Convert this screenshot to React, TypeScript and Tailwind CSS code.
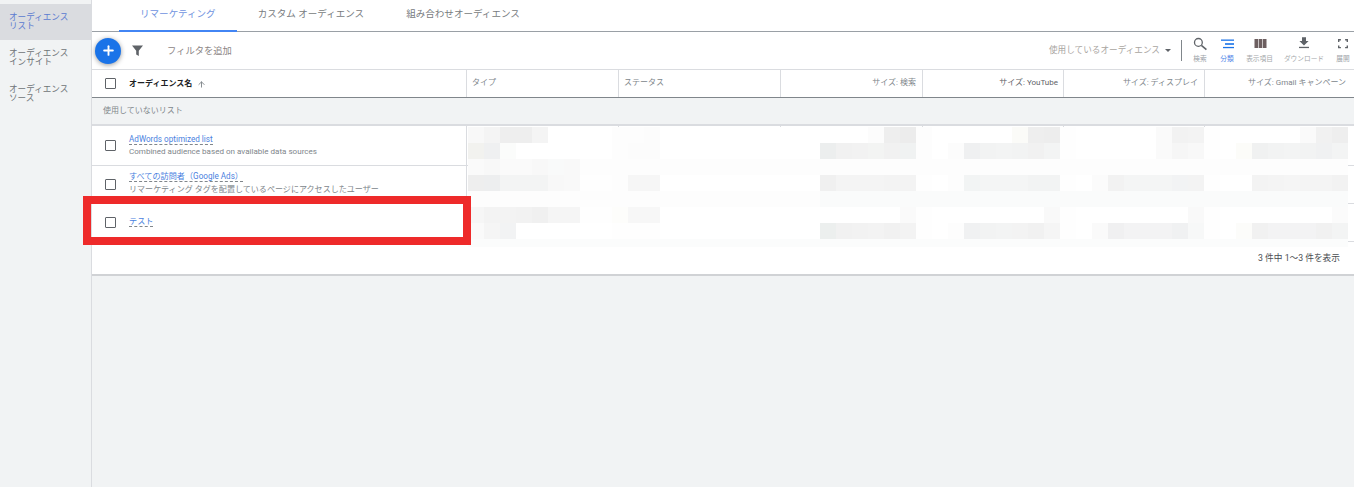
import { ArrowUp, Plus } from "lucide-react";

const FONT = "font-['Roboto','Noto_Sans_CJK_JP',sans-serif]";

const sideItems = [
  { lines: ["オーディエンス", "リスト"], active: true },
  { lines: ["オーディエンス", "インサイト"], active: false },
  { lines: ["オーディエンス", "ソース"], active: false },
];

// blurred-out cells of the table, 16px blocks, one list of hex shades per row
const W = "ffffff";
const fill = (n: number, c: string) => Array(n).fill(c) as string[];
const mosaic: string[][] = [
  ["f8f8f8", "f4f4f4", "eeeeee", "eeeeee", "f4f4f4", ...fill(4, W), "fdfdfd", "fdfdfd", "fcfcfc", ...fill(13, W), "fcfcfc", "eeeeee", "ececec", "fdfdfd", ...fill(5, W), "fbfbf8", "eeeeee", "ededed", "fefefe", ...fill(5, W), "fafafa", "f2f2f2", "f3f3f3", "fefefe", ...fill(5, W), "fafafa", "f1f1f1", "eeeeee"],
  ["f2f2ef", "eff0f1", "fbfcfb", ...fill(6, W), "fdfdfd", "fcfcfc", "fcfcfc", ...fill(10, W), "eceeee", "f1f1f1", "f2f2f2", "f3f4f3", "f1f1f1", "f0f2f2", "fdfdfd", W, "fcfcfc", "eff0f1", "f2f3f3", "f3f4f4", "f2f3f3", "f1f1f1", "f3f4f4", "fefefe", ...fill(5, W), "fafafa", "f6f6f6", "f8f8f8", "fefefe", W, "fcfcf9", "f0f1f1", "f2f3f3", "f3f4f4", "f2f3f3", "f0f1f2", "f3f4f4"],
  ["fafafa", "f8f8f8", "fafafa", "fafafa", "f8f8f8", "f9fafa", "f9f9f9", ...fill(48, "fdfdfd")],
  ["eeeeee", "edeeef", "f3f4f4", "f3f4f4", "f3f4f4", "f8f8f8", "f9f9f9", "fefefe", "fefefe", "fdfdfd", "f6f6f6", "f6f6f6", ...fill(10, W), "f0f0f0", "f4f4f4", "f4f4f4", "f4f4f4", "f3f3f3", "f3f3f3", "fefefe", W, "fdfdfd", "f2f4f4", "f4f5f5", "f4f5f5", "f4f5f5", "f2f3f3", "f2f3f3", "fefefe", W, "fbfbfb", "f2f2f2", "f4f5f5", "f4f5f5", "f4f5f5", "f2f3f4", "f3f3f3", "fefefe", W, W, "f3f3f3", "f4f4f4", "f5f5f5", "f4f4f4", "f4f4f4", "f2f2f2"],
  [...fill(22, "fdfdfd"), ...fill(33, "fafbfb")],
  ["f6f6f6", "f3f3f3", "f3f3f3", "f2f2f2", "f0f0f0", "f5f5f5", "f5f5f5", "fefefe", "fefefe", "fdfdfb", "f7f7f7", "f7f7f7", ...fill(15, W), "fafafa", "fefefe", ...fill(7, W), "f9f9f9", "fefefe", ...fill(7, W), "f9f9f9", "fefefe", ...fill(7, W), "fbfbfb"],
  ["fafafa", "f5f5f5", "f2f3f4", ...fill(6, W), "fefefe", "fefefe", "fefefe", ...fill(10, W), "ecefee", "f1f1f1", "f2f2f2", "f3f3f3", "f1f1f1", "f3f3f3", "fefefe", W, "fdfdfd", "f0f1f2", "f2f3f3", "f3f4f4", "f3f3f3", "f1f1f1", "f5f5f5", "fefefe", W, "fafafa", "f0f0f1", "f3f3f4", "f3f3f4", "f3f3f4", "f0f1f2", "f7f8f8", "fefefe", W, "fcfcfa", "f1f1f1", "f3f3f4", "f3f3f4", "f3f3f4", "f1f1f1", "f3f4f4"],
  fill(55, "fbfcfc"),
];

const columns = [
  { label: "タイプ", width: "w-[152px]", align: "text-left pl-[5px]" },
  { label: "ステータス", width: "w-[162px]", align: "text-left pl-[5px]" },
  { label: "サイズ: 検索", width: "w-[142px]", align: "text-right pr-[6px]" },
  { label: "サイズ: YouTube", width: "w-[141px]", align: "text-right pr-[5px] text-[#5f6368]" },
  { label: "サイズ: ディスプレイ", width: "w-[141px]", align: "text-right pr-[6px]" },
];

const rows = [
  {
    name: "AdWords optimized list",
    desc: "Combined audience based on available data sources",
    height: "h-[40px]",
    text: "",
    gap: "mt-[1px]",
  },
  {
    name: "すべての訪問者（Google Ads）",
    desc: "リマーケティング タグを配置しているページにアクセスしたユーザー",
    height: "h-[38px]",
    text: "-mt-[3px]",
    gap: "mt-[2px]",
  },
  { name: "テスト", desc: "", height: "h-[38px]", text: "-mt-[2px]", gap: "" },
];

function Checkbox() {
  return <div className="w-[11px] h-[11px] border-[1.5px] border-[#5f6368] rounded-[1px] bg-white shrink-0" />;
}

function SearchIcon() {
  return (
    <svg width="14" height="14" viewBox="0 0 14 14" fill="none" stroke="#5f6368">
      <circle cx="5.4" cy="5.4" r="3.9" strokeWidth="1.3" />
      <path d="M8.4 8.4L13.4 12.6" strokeWidth="1.6" />
    </svg>
  );
}

function SegmentIcon() {
  return (
    <svg width="14" height="14" viewBox="0 0 14 14" fill="#1a73e8">
      <rect x="1" y="2.5" width="13" height="1.3" />
      <rect x="5" y="6.2" width="9" height="1.6" />
      <rect x="3" y="9.9" width="11" height="1.3" />
    </svg>
  );
}

function ColumnsIcon() {
  return (
    <svg width="14" height="14" viewBox="0 0 14 14" fill="#6d5f60">
      <rect x="1.5" y="2" width="3.6" height="9" />
      <rect x="5.7" y="2" width="3.6" height="9" />
      <rect x="9.9" y="2" width="3.6" height="9" />
    </svg>
  );
}

function DownloadIcon() {
  return (
    <svg width="14" height="14" viewBox="0 0 14 14" fill="#5f6368">
      <path d="M5 0.2h4v3.8h2.6L7 8.6 2.4 4H5z" />
      <rect x="2" y="9.8" width="10" height="1.3" />
    </svg>
  );
}

function ExpandIcon() {
  return (
    <svg width="14" height="14" viewBox="0 0 14 14" fill="none" stroke="#5f6368" strokeWidth="1.4">
      <path d="M2.7 4.9V2.7h2.2M9.1 2.7h2.2v2.2M11.3 8.4v2.2H9.1M4.9 10.6H2.7V8.4" />
    </svg>
  );
}

const tools = [
  { label: "検索", width: "w-[28px]", icon: <SearchIcon />, color: "text-[#9aa0a6]" },
  { label: "分類", width: "w-[26px]", icon: <SegmentIcon />, color: "text-[#4f86e8]" },
  { label: "表示項目", width: "w-[39px]", icon: <ColumnsIcon />, color: "text-[#a5a8ab]" },
  { label: "ダウンロード", width: "w-[50px]", icon: <DownloadIcon />, color: "text-[#a5a8ab]" },
  { label: "展開", width: "w-[22px] ml-[3px]", icon: <ExpandIcon />, color: "text-[#9aa0a6]" },
];

export default function App() {
  return (
    <div className={`flex h-screen overflow-hidden bg-[#f1f3f4] ${FONT}`}>
      {/* Sidebar */}
      <aside className="w-[92px] shrink-0 border-r border-[#dadce0] pt-1">
        {sideItems.map((item) => (
          <div
            key={item.lines[1]}
            className={`h-9 pl-[9px] flex flex-col justify-center text-[8.6px] leading-[9.5px] ${
              item.active ? "bg-[#dadce0] text-[#5a7bd0]" : "text-[#6f7377]"
            }`}
          >
            {item.lines.map((line) => (
              <span key={line}>{line}</span>
            ))}
          </div>
        ))}
      </aside>

      <main className="flex-1 min-w-0">
        {/* Tabs */}
        <div className="h-8 bg-white border-b border-[#9aa0a6] pl-[27px] flex text-[9.55px]">
          <div className="px-[21px] pt-[8px] leading-3 border-b-2 border-[#4285f4] h-8 text-[#6f93e0]">リマーケティング</div>
          <div className="px-[21px] pt-[8px] leading-3 text-[#777b80]">カスタム オーディエンス</div>
          <div className="px-[21px] pt-[8px] leading-3 text-[#777b80]">組み合わせオーディエンス</div>
        </div>

        {/* Toolbar */}
        <div className="h-[37px] bg-white pl-[3px] flex items-center">
          <div className="w-[26px] h-[26px] rounded-full bg-[#1a73e8] shadow-[0_1px_5px_rgba(0,0,0,0.4)] flex items-center justify-center">
            <Plus size={15} strokeWidth={3} className="text-white" />
          </div>
          <svg className="ml-[11px]" width="11" height="11" viewBox="0 0 11 11" fill="#5f6368">
            <path d="M0 0.5h11L6.8 5.8V11L4.2 9.4V5.8z" />
          </svg>
          <span className="ml-[24px] text-[9.3px] text-[#8c8585]">フィルタを追加</span>
          <span className="ml-auto text-[8.65px] text-[#a9a59f]">使用しているオーディエンス</span>
          <span className="ml-[5px] w-0 h-0 border-x-[3.5px] border-x-transparent border-t-[3.5px] border-t-[#5f6368]" />
          <div className="ml-[10px] mr-[4px] w-px h-[21px] bg-[#80868b]" />
          {tools.map((tool) => (
            <div key={tool.label} className={`${tool.width} h-full pt-[5px] flex flex-col items-center`}>
              {tool.icon}
              <span className={`mt-[3px] text-[6.7px] leading-[10px] whitespace-nowrap ${tool.color}`}>{tool.label}</span>
            </div>
          ))}
        </div>

        {/* Table */}
        <div className="relative bg-white border-b-2 border-[#d0d2d5]">
          <div className="h-[29px] flex border-t border-b border-t-[#dadce0] border-b-[#80868b] text-[8px] text-[#80868b]">
            <div className="w-[375px] border-r border-[#dadce0] pl-[13px] flex items-center">
              <Checkbox />
              <span className="ml-[13px] font-bold text-[#202124]">オーディエンス名</span>
              <ArrowUp size={9} strokeWidth={2.5} className="ml-[5px] mt-[2px] text-[#80868b]" />
            </div>
            {columns.map((col) => (
              <div key={col.label} className={`${col.width} border-r border-[#dadce0] leading-[26px] ${col.align}`}>
                {col.label}
              </div>
            ))}
            <div className="flex-1 text-right pr-[8px] leading-[26px] whitespace-nowrap">サイズ: Gmail キャンペーン</div>
          </div>

          <div className="h-[28px] bg-[#f1f3f4] border-b-2 border-[#dadce0] pl-[11px] pt-[8px] text-[8px] leading-[10px] text-[#80868b]">
            使用していないリスト
          </div>

          {rows.map((row) => (
            <div key={row.name} className={`${row.height} flex border-b border-[#dadce0]`}>
              <div className="w-[375px] border-r border-[#dadce0] pl-[13px] flex items-center">
                <Checkbox />
                <div className={`ml-[13px] ${row.text}`}>
                  <div className="w-fit text-[8.15px] leading-[10px] text-[#4a7fe0] border-b border-dashed border-[#80868b]">{row.name}</div>
                  {row.desc && <div className={`${row.gap} text-[8.05px] leading-[11px] text-[#80868b] whitespace-nowrap`}>{row.desc}</div>}
                </div>
              </div>
              {columns.map((col) => (
                <div key={col.label} className={`${col.width} border-r border-[#dadce0]`} />
              ))}
            </div>
          ))}

          <div className="h-[32px] text-right pr-[14px] pt-[10px] text-[8.7px] leading-[12px] text-[#4a4e52]">3 件中 1～3 件を表示</div>

          {/* Pixelated cells lying over the data columns */}
          <div className="absolute left-[376px] top-[58px] flex flex-col">
            {mosaic.map((line, y) => (
              <div key={y} className={`flex ${y === 7 ? "h-2" : "h-4"}`}>
                {line.map((shade, x) => (
                  <div key={x} className="w-4 h-full" style={{ backgroundColor: `#${shade}` }} />
                ))}
              </div>
            ))}
          </div>

          {/* Red highlight around the third row */}
          <div className="absolute left-[-9px] top-[127px] w-[388px] h-[49px] border-8 border-[#ee2a2a] pointer-events-none" />
        </div>
      </main>
    </div>
  );
}
